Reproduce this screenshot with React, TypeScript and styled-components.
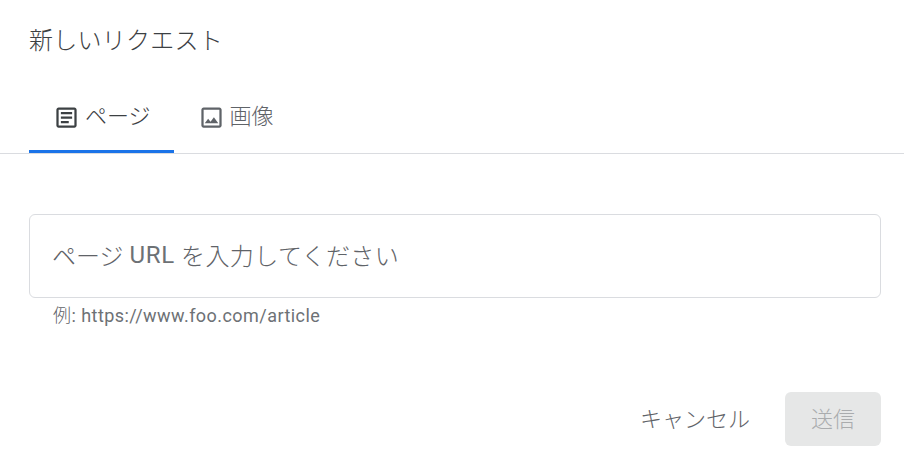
import React, { useState } from 'react';
import styled, { createGlobalStyle } from 'styled-components';

const GlobalStyle = createGlobalStyle`
    html, body {
        margin: 0;
        padding: 0;
        background: #fff;
    }
    * {
        box-sizing: border-box;
    }
`;

const fontStack = `Roboto, "Noto Sans CJK JP", sans-serif`;

const Dialog = styled.div`
    width: 904px;
    height: 463px;
    display: flex;
    flex-direction: column;
    font-family: ${fontStack};
    font-weight: 300;
    color: #5f6368;
    background: #fff;
    overflow: hidden;
`;

const Title = styled.h2`
    margin: 0;
    padding: 23px 29px 0;
    height: 77px;
    font-size: 24px;
    line-height: 36px;
    font-weight: 300;
    letter-spacing: 0.25px;
    color: #3c4043;
`;

const TabBar = styled.div`
    display: flex;
    height: 77px;
    padding: 0 29px;
    border-bottom: 1px solid #dadce0;
`;

const Tab = styled.button<{ $active?: boolean }>`
    display: flex;
    align-items: center;
    gap: 5px;
    height: 76px;
    padding: 0 23px 0 24px;
    border: 0;
    border-bottom: 3px solid ${({ $active }) => ($active ? '#1a73e8' : 'transparent')};
    background: none;
    font-family: inherit;
    font-weight: 300;
    font-size: 22px;
    color: ${({ $active }) => ($active ? '#3c4043' : '#5f6368')};
`;

const Icon = styled.svg`
    width: 27px;
    height: 27px;
    margin-top: 8px;
    fill: currentColor;
    flex: none;
`;

const Body = styled.div`
    padding: 60px 23px 0 29px;
`;

const UrlField = styled.div`
    display: flex;
    align-items: center;
    height: 84px;
    padding: 0 22px 3px;
    border: 1px solid #dadce0;
    border-radius: 6px;
    font-size: 24px;
    white-space: pre;
`;

const Latin = styled.span`
    font-weight: 400;
    letter-spacing: 0.7px;
    color: #6d7175;
`;

const Wide = styled.span`
    letter-spacing: 0.4px;
`;

const Hint = styled.div`
    padding: 7px 0 0 24px;
    font-size: 18px;
    font-weight: 400;
    line-height: 22px;
    letter-spacing: 0.45px;
    color: #6d7175;
`;

const HintLabel = styled.span`
    font-weight: 300;
    color: #5f6368;
`;

const Actions = styled.div`
    display: flex;
    justify-content: flex-end;
    align-items: center;
    gap: 9px;
    padding: 65px 23px 0 0;
`;

const Button = styled.button<{ $primary?: boolean }>`
    height: 54px;
    padding: 0 26px 5px;
    border: 0;
    border-radius: 6px;
    font-family: inherit;
    font-weight: 300;
    font-size: 22px;
    color: ${({ $primary }) => ($primary ? '#aaacae' : '#5f6368')};
    background: ${({ $primary }) => ($primary ? '#e6e7e7' : 'transparent')};
`;

const tabs = [
    {
        key: 'page',
        label: 'ページ',
        path: 'M19 5v14H5V5h14m0-2H5c-1.1 0-2 .9-2 2v14c0 1.1.9 2 2 2h14c1.1 0 2-.9 2-2V5c0-1.1-.9-2-2-2zM14 17H7v-2h7v2zm3-4H7v-2h10v2zm0-4H7V7h10v2z',
    },
    {
        key: 'image',
        label: '画像',
        path: 'M19 5v14H5V5h14m0-2H5c-1.1 0-2 .9-2 2v14c0 1.1.9 2 2 2h14c1.1 0 2-.9 2-2V5c0-1.1-.9-2-2-2zm-4.86 8.86l-3 3.87L9 13.14 6 17h12l-3.86-5.14z',
    },
];

export default function App() {
    const [current, setCurrent] = useState('page');

    return (
        <Dialog>
            <GlobalStyle />
            <Title>新しいリクエスト</Title>
            <TabBar>
                {tabs.map((tab) => (
                    <Tab
                        key={tab.key}
                        $active={current === tab.key}
                        onClick={() => setCurrent(tab.key)}
                    >
                        <Icon viewBox="0 0 24 24">
                            <path d={tab.path} />
                        </Icon>
                        {tab.label}
                    </Tab>
                ))}
            </TabBar>
            <Body>
                <UrlField>
                    <span>ページ </span>
                    <Latin>URL</Latin>
                    <Wide> を入力してください</Wide>
                </UrlField>
                <Hint>
                    <HintLabel>例</HintLabel>: https://www.foo.com/article
                </Hint>
            </Body>
            <Actions>
                <Button>キャンセル</Button>
                <Button $primary disabled>
                    送信
                </Button>
            </Actions>
        </Dialog>
    );
}
